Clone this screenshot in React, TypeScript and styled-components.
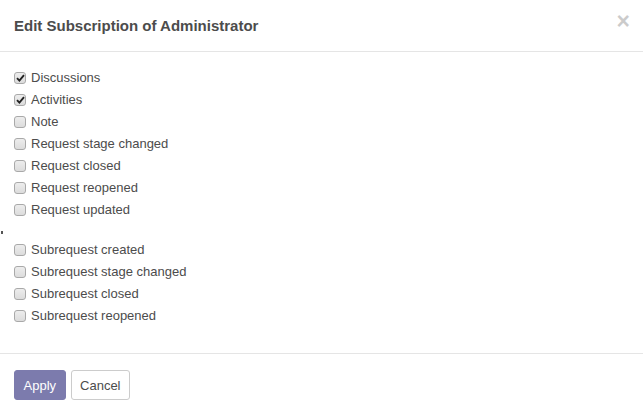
import React from 'react';
import styled, { createGlobalStyle } from 'styled-components';

const GlobalStyle = createGlobalStyle`
  body {
    margin: 0;
    background: #fff;
    font-family: "Liberation Sans", Arial, sans-serif;
    font-size: 13px;
    color: #4c4c4c;
  }
`;

const Modal = styled.div`
  width: 643px;
  background: #fff;
`;

const Header = styled.div`
  display: flex;
  justify-content: space-between;
  align-items: flex-start;
  height: 52px;
  box-sizing: border-box;
  padding: 17px 14px 0 14px;
  border-bottom: 1px solid #e5e5e5;
`;

const Title = styled.h4`
  margin: 0;
  font-size: 15px;
  font-weight: bold;
  line-height: 18px;
  color: #4c4c4c;
`;

const Close = styled.button`
  border: none;
  background: none;
  padding: 0;
  margin: -7px -1px 0 0;
  font-family: "Liberation Sans", Arial, sans-serif;
  font-size: 23px;
  font-weight: bold;
  line-height: 1;
  color: #000;
  opacity: 0.2;
  cursor: pointer;
`;

const Body = styled.div`
  padding: 15px 14px 26px 14px;
  border-bottom: 1px solid #e5e5e5;
`;

const Row = styled.label`
  display: flex;
  align-items: center;
  height: 22px;
  line-height: 22px;
  cursor: pointer;
`;

const Box = styled.span`
  display: inline-flex;
  align-items: center;
  justify-content: center;
  box-sizing: border-box;
  width: 12px;
  height: 12px;
  margin-right: 5px;
  border: 1px solid #a9a9a9;
  border-radius: 3px;
  background: linear-gradient(#ededed, #dcdcdc);
`;

const Separator = styled.div`
  position: relative;
  height: 18px;

  &::before {
    content: '';
    position: absolute;
    left: -13px;
    top: 10px;
    width: 2px;
    height: 3px;
    background: #555;
  }
`;

const Footer = styled.div`
  display: flex;
  gap: 5px;
  padding: 16px 14px;
`;

const Button = styled.button<{ $primary?: boolean }>`
  height: 30px;
  padding: 0 8.5px;
  font-family: "Liberation Sans", Arial, sans-serif;
  font-size: 13px;
  border-radius: 3px;
  border: 1px solid ${p => (p.$primary ? '#7c7bad' : '#ccc')};
  background: ${p => (p.$primary ? '#7c7bad' : '#fff')};
  color: ${p => (p.$primary ? '#fff' : '#4c4c4c')};
  cursor: pointer;
`;

function CheckItem({ name, checked }: { name: string; checked?: boolean }) {
  return (
    <Row>
      <Box>
        {checked && (
          <svg width="9" height="8" viewBox="0 0 9 8">
            <path d="M1 4.2 L3.4 6.6 L8 1.2" fill="none" stroke="#222" strokeWidth="1.9" />
          </svg>
        )}
      </Box>
      {name}
    </Row>
  );
}

const groupA = [
  { name: 'Discussions', checked: true },
  { name: 'Activities', checked: true },
  { name: 'Note', checked: false },
  { name: 'Request stage changed', checked: false },
  { name: 'Request closed', checked: false },
  { name: 'Request reopened', checked: false },
  { name: 'Request updated', checked: false },
];

const groupB = [
  'Subrequest created',
  'Subrequest stage changed',
  'Subrequest closed',
  'Subrequest reopened',
];

export default function App() {
  return (
    <>
      <GlobalStyle />
      <Modal>
        <Header>
          <Title>Edit Subscription of Administrator</Title>
          <Close aria-label="Close">×</Close>
        </Header>
        <Body>
          {groupA.map(item => (
            <CheckItem key={item.name} name={item.name} checked={item.checked} />
          ))}
          <Separator />
          {groupB.map(name => (
            <CheckItem key={name} name={name} />
          ))}
        </Body>
        <Footer>
          <Button $primary>Apply</Button>
          <Button>Cancel</Button>
        </Footer>
      </Modal>
    </>
  );
}
